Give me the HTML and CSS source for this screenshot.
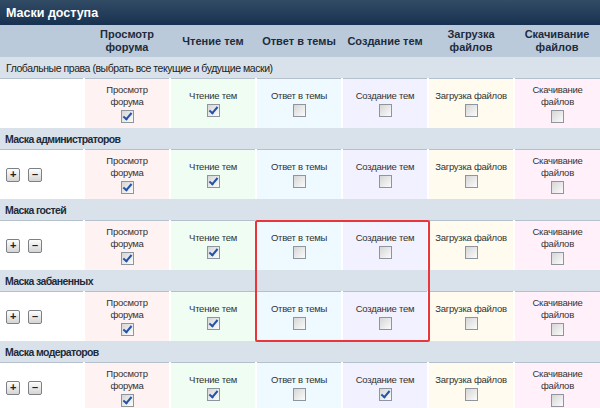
FILE: index.html
```html
<!DOCTYPE html>
<html lang="ru">
<head>
    <meta charset="UTF-8">
    <title>Маски доступа</title>
    <link rel="stylesheet" href="styles.css">
</head>
<body>
    <div class="panel">
        <h3 class="panel-title">Маски доступа</h3>
        <table class="mask-table">
            <tr class="head-row">
                <th class="first"></th>
                <th>Просмотр<br>форума</th>
                <th>Чтение тем</th>
                <th>Ответ в темы</th>
                <th>Создание тем</th>
                <th>Загрузка<br>файлов</th>
                <th>Скачивание<br>файлов</th>
            </tr>
            <tr class="label-row">
                <td colspan="7" class="global">Глобальные права (выбрать все текущие и будущие маски)</td>
            </tr>
            <tr class="perm-row">
                <td class="first"></td>
                <td class="c1">Просмотр<br>форума<br><span class="box on"></span></td>
                <td class="c2">Чтение тем<br><span class="box on"></span></td>
                <td class="c3">Ответ в темы<br><span class="box"></span></td>
                <td class="c4">Создание тем<br><span class="box"></span></td>
                <td class="c5">Загрузка файлов<br><span class="box"></span></td>
                <td class="c6">Скачивание<br>файлов<br><span class="box"></span></td>
            </tr>
            <tr class="label-row">
                <td colspan="7">Маска администраторов</td>
            </tr>
            <tr class="perm-row">
                <td class="first"><span class="btn">+</span><span class="btn">&ndash;</span></td>
                <td class="c1">Просмотр<br>форума<br><span class="box on"></span></td>
                <td class="c2">Чтение тем<br><span class="box on"></span></td>
                <td class="c3">Ответ в темы<br><span class="box"></span></td>
                <td class="c4">Создание тем<br><span class="box"></span></td>
                <td class="c5">Загрузка файлов<br><span class="box"></span></td>
                <td class="c6">Скачивание<br>файлов<br><span class="box"></span></td>
            </tr>
            <tr class="label-row">
                <td colspan="7">Маска гостей</td>
            </tr>
            <tr class="perm-row">
                <td class="first"><span class="btn">+</span><span class="btn">&ndash;</span></td>
                <td class="c1">Просмотр<br>форума<br><span class="box on"></span></td>
                <td class="c2">Чтение тем<br><span class="box on"></span></td>
                <td class="c3">Ответ в темы<br><span class="box"></span></td>
                <td class="c4">Создание тем<br><span class="box"></span></td>
                <td class="c5">Загрузка файлов<br><span class="box"></span></td>
                <td class="c6">Скачивание<br>файлов<br><span class="box"></span></td>
            </tr>
            <tr class="label-row">
                <td colspan="7">Маска забаненных</td>
            </tr>
            <tr class="perm-row">
                <td class="first"><span class="btn">+</span><span class="btn">&ndash;</span></td>
                <td class="c1">Просмотр<br>форума<br><span class="box on"></span></td>
                <td class="c2">Чтение тем<br><span class="box on"></span></td>
                <td class="c3">Ответ в темы<br><span class="box"></span></td>
                <td class="c4">Создание тем<br><span class="box"></span></td>
                <td class="c5">Загрузка файлов<br><span class="box"></span></td>
                <td class="c6">Скачивание<br>файлов<br><span class="box"></span></td>
            </tr>
            <tr class="label-row">
                <td colspan="7">Маска модераторов</td>
            </tr>
            <tr class="perm-row">
                <td class="first"><span class="btn">+</span><span class="btn">&ndash;</span></td>
                <td class="c1">Просмотр<br>форума<br><span class="box on"></span></td>
                <td class="c2">Чтение тем<br><span class="box on"></span></td>
                <td class="c3">Ответ в темы<br><span class="box"></span></td>
                <td class="c4">Создание тем<br><span class="box on"></span></td>
                <td class="c5">Загрузка файлов<br><span class="box"></span></td>
                <td class="c6">Скачивание<br>файлов<br><span class="box"></span></td>
            </tr>
        </table>
        <!-- выделение -->
        <div class="highlight"></div>
    </div>
</body>
</html>
```

FILE: styles.css
```css
body{
    margin: 0;
    background: #fff;
    font-family: "Liberation Sans", Arial, sans-serif;
}

.panel{
    position: relative;
    width: 600px;
}

.panel-title{
    margin: 0;
    height: 25px;
    line-height: 26px;
    padding-left: 6px;
    font-size: 12.5px;
    color: #fff;
    background: linear-gradient(#324c66, #173150);
}

.mask-table{
    width: 600px;
    border-collapse: collapse;
    table-layout: fixed;
}

.mask-table th{
    height: 32px;
    padding: 0;
    font-size: 11px;
    line-height: 13px;
    color: #1d2b3c;
    background: #bacada;
    text-align: center;
}

.mask-table .first{
    width: 84px;
}

.label-row td{
    height: 21px;
    padding: 0 0 0 5px;
    font-size: 10.5px;
    letter-spacing: -0.6px;
    font-weight: bold;
    color: #1d2b3c;
    background: #d9e2ea;
    border-bottom: 1px solid #b4c0cb;
}

.label-row td.global{
    padding-left: 6px;
    font-size: 10.5px;
    letter-spacing: -0.45px;
    font-weight: normal;
    color: #222;
}

.perm-row td{
    height: 49px;
    padding: 0;
    font-size: 9.5px;
    letter-spacing: -0.25px;
    line-height: 12px;
    color: #333;
    text-align: center;
    border-left: 2px solid #fff;
}

.perm-row td.first{
    border-left: 0;
    text-align: left;
    padding-left: 6px;
}

.c1{ background: #fff2f2; }
.c2{ background: #effdf2; }
.c3{ background: #eefaff; }
.c4{ background: #f1f1ff; }
.c5{ background: #fffcef; }
.c6{ background: #fff0f9; }

.box{
    display: inline-block;
    position: relative;
    width: 11px;
    height: 11px;
    margin-top: 2px;
    border: 1px solid #8e959c;
    background: linear-gradient(135deg, #d6d6d6, #fbfbfb);
    vertical-align: top;
}

.box.on::after{
    content: "";
    position: absolute;
    left: 3px;
    top: 0;
    width: 3px;
    height: 7px;
    border: solid #2153a8;
    border-width: 0 2px 2px 0;
    transform: rotate(40deg);
}

.btn{
    display: inline-block;
    width: 12px;
    height: 12px;
    margin-right: 8px;
    border: 1px solid #7d8186;
    border-radius: 2px;
    background: linear-gradient(#fdfdfd, #d4d4d4);
    font-size: 11px;
    line-height: 11px;
    font-weight: bold;
    text-align: center;
    color: #222;
    vertical-align: middle;
}

.highlight{
    position: absolute;
    left: 255px;
    top: 220px;
    width: 171px;
    height: 118px;
    border: 2px solid #e8363a;
    border-radius: 2px;
}
```
